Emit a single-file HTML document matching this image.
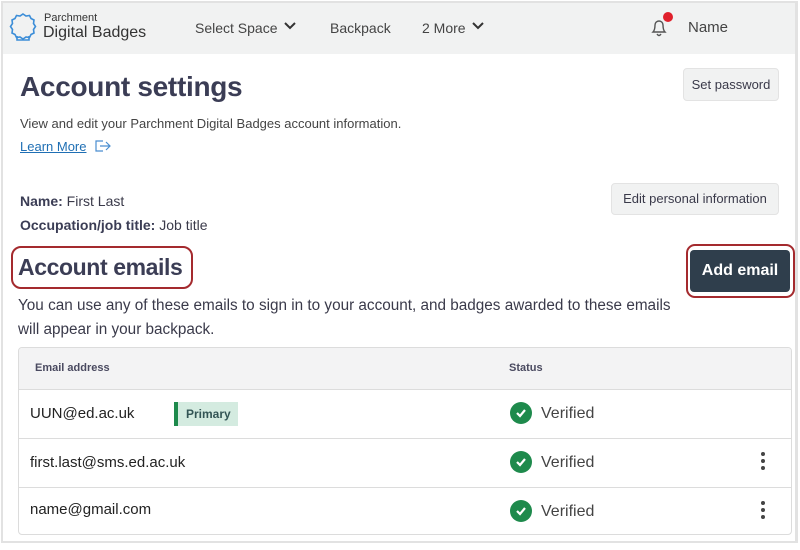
<!DOCTYPE html>
<html><head><style>
*{box-sizing:border-box;margin:0;padding:0}
body{width:800px;height:550px;background:#fff;font-family:"Liberation Sans",sans-serif;position:relative;overflow:hidden;color:#3a3a4a}
.frame{position:absolute;left:1px;top:1px;width:797px;height:542px;border:2px solid #e2e2e2;border-right-width:3px}
.hdr{position:absolute;left:3px;top:3px;width:792px;height:51px;background:#f1f2f2}
.a{position:absolute;white-space:nowrap}
.btn{position:absolute;background:#f1f2f2;border:1px solid #e3e3e3;border-radius:4px;font-size:13px;color:#3a3a4a;text-align:center}
.tbl{position:absolute;left:18px;top:347px;width:774px;height:188px;border:1px solid #dcdcdc;border-radius:4px;overflow:hidden}
.row{position:absolute;left:0;width:100%;border-top:1px solid #dcdcdc}
.chk{position:absolute;width:22px;height:22px;border-radius:50%;background:#1e8a4c}
.dots{position:absolute;width:4px}
.dots i{display:block;width:4px;height:4px;border-radius:50%;background:#444;margin-bottom:3px}
</style></head><body>
<div class="frame"></div>
<div class="hdr"></div>
<svg class="a" style="left:9px;top:12px" width="28" height="30" viewBox="0 0 28 30"><path d="M14 2 l3 2 3.5-.5 1.5 3 3 1.5-.5 3.5 2 3-2 3 .5 3.5-3 1.5-1.5 3-3.5-.5-3 2-3-2-3.5.5-1.5-3-3-1.5.5-3.5-2-3 2-3-.5-3.5 3-1.5 1.5-3 3.5.5z" fill="none" stroke="#3d8ed8" stroke-width="1.6"/><path d="M8 24 v4 h12 v-4" fill="none" stroke="#3d8ed8" stroke-width="1.6"/></svg>
<div class="a" style="left:44px;top:12px;font-size:11px;color:#333">Parchment</div>
<div class="a" style="left:43px;top:24px;font-size:16px;color:#333">Digital Badges</div>
<div class="a" style="left:195px;top:20px;font-size:14px;color:#444">Select Space</div>
<svg class="a" style="left:283px;top:21px" width="14" height="10"><path d="M2 2 l5 5 5-5" fill="none" stroke="#333" stroke-width="2"/></svg>
<div class="a" style="left:330px;top:20px;font-size:14px;color:#444">Backpack</div>
<div class="a" style="left:422px;top:20px;font-size:14px;color:#444">2 More</div>
<svg class="a" style="left:471px;top:21px" width="14" height="10"><path d="M2 2 l5 5 5-5" fill="none" stroke="#333" stroke-width="2"/></svg>
<svg class="a" style="left:649px;top:16px" width="20" height="22"><path d="M4 16 q2-2 2-7 a4 4 0 0 1 8 0 q0 5 2 7z M8 18 q2 3 4 0" fill="none" stroke="#555" stroke-width="1.4"/></svg>
<div class="a" style="left:663px;top:12px;width:10px;height:10px;border-radius:50%;background:#e0202c"></div>
<div class="a" style="left:688px;top:19px;font-size:15px;color:#444">Name</div>

<div class="a" style="left:20px;top:71px;font-size:28px;font-weight:bold;color:#3b3d55;letter-spacing:-0.3px">Account settings</div>
<div class="btn" style="left:683px;top:68px;width:96px;height:33px;line-height:31px">Set password</div>
<div class="a" style="left:20px;top:116px;font-size:13px;color:#444">View and edit your Parchment Digital Badges account information.</div>
<div class="a" style="left:20px;top:139px;font-size:13px;color:#1f6fb4;text-decoration:underline">Learn More</div>
<svg class="a" style="left:95px;top:140px" width="16" height="12"><path d="M8 1 H1 V11 H8 M5 6 H15 M11 2 l4 4-4 4" fill="none" stroke="#4a8ed0" stroke-width="1.2"/></svg>

<div class="a" style="left:20px;top:193px;font-size:14px"><b style="color:#3b3d55">Name:</b> First Last</div>
<div class="a" style="left:20px;top:217px;font-size:14px"><b style="color:#3b3d55">Occupation/job title:</b> Job title</div>
<div class="btn" style="left:611px;top:183px;width:168px;height:32px;line-height:30px">Edit personal information</div>

<div class="a" style="left:11px;top:246px;width:182px;height:43px;border:2px solid #a42a2e;border-radius:10px"></div>
<div class="a" style="left:18px;top:254px;font-size:23px;font-weight:bold;color:#3b3d55;letter-spacing:-0.4px">Account emails</div>
<div class="a" style="left:686px;top:244px;width:109px;height:54px;border:2px solid #a42a2e;border-radius:9px"></div>
<div class="a" style="left:690px;top:250px;width:100px;height:42px;background:#2f3e4c;border-radius:4px;color:#fff;font-weight:bold;font-size:16px;text-align:center;line-height:42px">Add email</div>
<div class="a" style="left:18px;top:294px;font-size:15.3px;line-height:24px;color:#3a3a4a">You can use any of these emails to sign in to your account, and badges awarded to these emails<br>will appear in your backpack.</div>

<div class="tbl">
<div style="position:absolute;left:0;top:0;width:100%;height:41px;background:#f3f3f4"></div>
<div class="a" style="left:16px;top:14px;font-size:11px;font-weight:bold;color:#4a4a60">Email address</div>
<div class="a" style="left:490px;top:14px;font-size:11px;font-weight:bold;color:#4a4a60">Status</div>
<div class="row" style="top:41px;height:49px"></div>
<div class="row" style="top:90px;height:49px"></div>
<div class="row" style="top:139px;height:49px"></div>
<div class="a" style="left:11px;top:57px;font-size:15px;color:#222">UUN@ed.ac.uk</div>
<div class="a" style="left:155px;top:54px;width:64px;height:24px;background:#d4ebe0;border-left:4px solid #1e8a4c;font-size:12px;font-weight:bold;color:#355;line-height:24px;padding-left:8px">Primary</div>
<div class="a" style="left:11px;top:106px;font-size:15px;color:#222">first.last@sms.ed.ac.uk</div>
<div class="a" style="left:11px;top:153px;font-size:15px;color:#222">name@gmail.com</div>
</div>
<div class="chk" style="left:510px;top:402px"></div><svg class="a" style="left:510px;top:402px" width="22" height="22"><path d="M7 11 l3 3 5-6" fill="none" stroke="#fff" stroke-width="2.2"/></svg>
<div class="chk" style="left:510px;top:451px"></div><svg class="a" style="left:510px;top:451px" width="22" height="22"><path d="M7 11 l3 3 5-6" fill="none" stroke="#fff" stroke-width="2.2"/></svg>
<div class="chk" style="left:510px;top:500px"></div><svg class="a" style="left:510px;top:500px" width="22" height="22"><path d="M7 11 l3 3 5-6" fill="none" stroke="#fff" stroke-width="2.2"/></svg>
<div class="a" style="left:541px;top:405px;font-size:16px;color:#444">Verified</div>
<div class="a" style="left:541px;top:454px;font-size:16px;color:#444">Verified</div>
<div class="a" style="left:541px;top:503px;font-size:16px;color:#444">Verified</div>
<div class="dots" style="left:761px;top:452px"><i></i><i></i><i></i></div>
<div class="dots" style="left:761px;top:501px"><i></i><i></i><i></i></div>
</body></html>
